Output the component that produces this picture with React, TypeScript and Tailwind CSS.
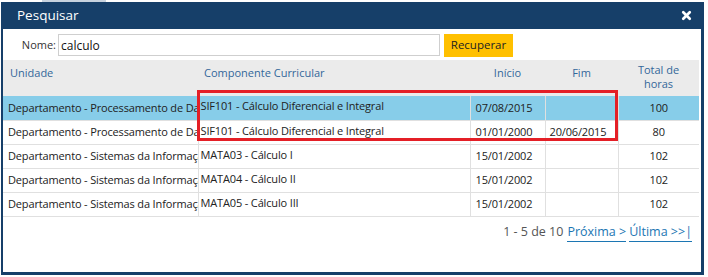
import { X } from "lucide-react";

const rows = [
  { unidade: "Departamento - Processamento de Dados", comp: "SIF101 - Cálculo Diferencial e Integral", inicio: "07/08/2015", fim: "", horas: "100", sel: true },
  { unidade: "Departamento - Processamento de Dados", comp: "SIF101 - Cálculo Diferencial e Integral", inicio: "01/01/2000", fim: "20/06/2015", horas: "80" },
  { unidade: "Departamento - Sistemas da Informação", comp: "MATA03 - Cálculo I", inicio: "15/01/2002", fim: "", horas: "102" },
  { unidade: "Departamento - Sistemas da Informação", comp: "MATA04 - Cálculo II", inicio: "15/01/2002", fim: "", horas: "102" },
  { unidade: "Departamento - Sistemas da Informação", comp: "MATA05 - Cálculo III", inicio: "15/01/2002", fim: "", horas: "102" },
];

export default function App() {
  return (
    <div
      className="relative w-[708px] h-[277px] overflow-hidden bg-white pt-[2px] pl-[1px]"
      style={{ fontFamily: '"Open Sans", "Noto Sans", Arial, sans-serif' }}
    >
      {/* bit of page behind the dialog */}
      <div className="absolute left-[42px] top-0 h-[2px] w-[64px] bg-[#c7d2de]" />

      <div className="flex h-[273px] w-[703px] flex-col bg-[#163f69] pl-[2px] pr-[3px] pb-[3px]">
        <div className="flex h-[27px] shrink-0 items-center justify-between pl-[14px] pr-[8px]">
          <span className="text-[13.5px] text-white">Pesquisar</span>
          <X className="h-[13px] w-[13px] text-white" strokeWidth={5} />
        </div>

        <div className="relative flex-1 bg-white">
          <div className="flex h-[31px] items-center pt-[1px]">
            <label className="w-[55px] pr-[2px] text-right text-[11px] text-[#333]">Nome:</label>
            <input
              value="calculo"
              readOnly
              className="h-[22px] w-[382px] border border-[#cfcfcf] px-[2px] text-[12px] text-[#111] outline-none"
            />
            <button className="ml-[4px] h-[23px] w-[69px] bg-[#ffc000] text-[11.5px] text-[#222]">Recuperar</button>
          </div>

          <table className="w-[696px] table-fixed border-collapse text-[11px]">
            <colgroup>
              <col className="w-[195px]" />
              <col className="w-[272px]" />
              <col className="w-[75px]" />
              <col className="w-[73px]" />
              <col className="w-[81px]" />
            </colgroup>
            <thead>
              <tr className="h-[36px] bg-[#ebebeb] text-[#33679a]">
                <th className="pl-[7px] text-left align-top pt-[5px] font-normal">Unidade</th>
                <th className="pl-[6px] text-left align-top pt-[5px] font-normal">Componente Curricular</th>
                <th className="text-center align-top pt-[5px] font-normal">Início</th>
                <th className="text-center align-top pt-[5px] font-normal">Fim</th>
                <th className="text-center align-top pt-[3px] font-normal leading-[14px]">
                  Total de
                  <br />
                  horas
                </th>
              </tr>
            </thead>
            <tbody className="text-[#222] tracking-[-0.15px]">
              {rows.map((r, i) => (
                <tr key={i} className={`h-[24px] border-b border-[#e0e0e0] ${r.sel ? "bg-[#87cde9]" : ""}`}>
                  <td className="overflow-hidden whitespace-nowrap pl-[5px] pt-[1px]">{r.unidade}</td>
                  <td className="overflow-hidden whitespace-nowrap border-l border-[#e0e0e0] pl-[2px] align-top pt-[2px]">{r.comp}</td>
                  <td className="border-l border-[#e0e0e0] pl-[5px] pt-[1px]">{r.inicio}</td>
                  <td className="border-l border-[#e0e0e0] pl-[4px] pt-[1px]">{r.fim}</td>
                  <td className="border-l border-[#e0e0e0] text-center pt-[1px]">{r.horas}</td>
                </tr>
              ))}
            </tbody>
          </table>

          <div className="mt-[6px] flex justify-end pr-[9px] text-[12.5px]">
            <span className="text-[#555]">1 - 5 de 10</span>
            <a className="ml-[4px] border-b border-[#1c76b3] text-[#1c76b3]">Próxima &gt;</a>
            <a className="ml-[3px] border-b border-[#1c76b3] text-[#1c76b3]">Última &gt;&gt;|</a>
          </div>

          {/* annotation box */}
          <div className="absolute left-[194px] top-[61px] h-[51px] w-[421px] border-[3px] border-[#e41f26]" />
        </div>
      </div>
    </div>
  );
}
